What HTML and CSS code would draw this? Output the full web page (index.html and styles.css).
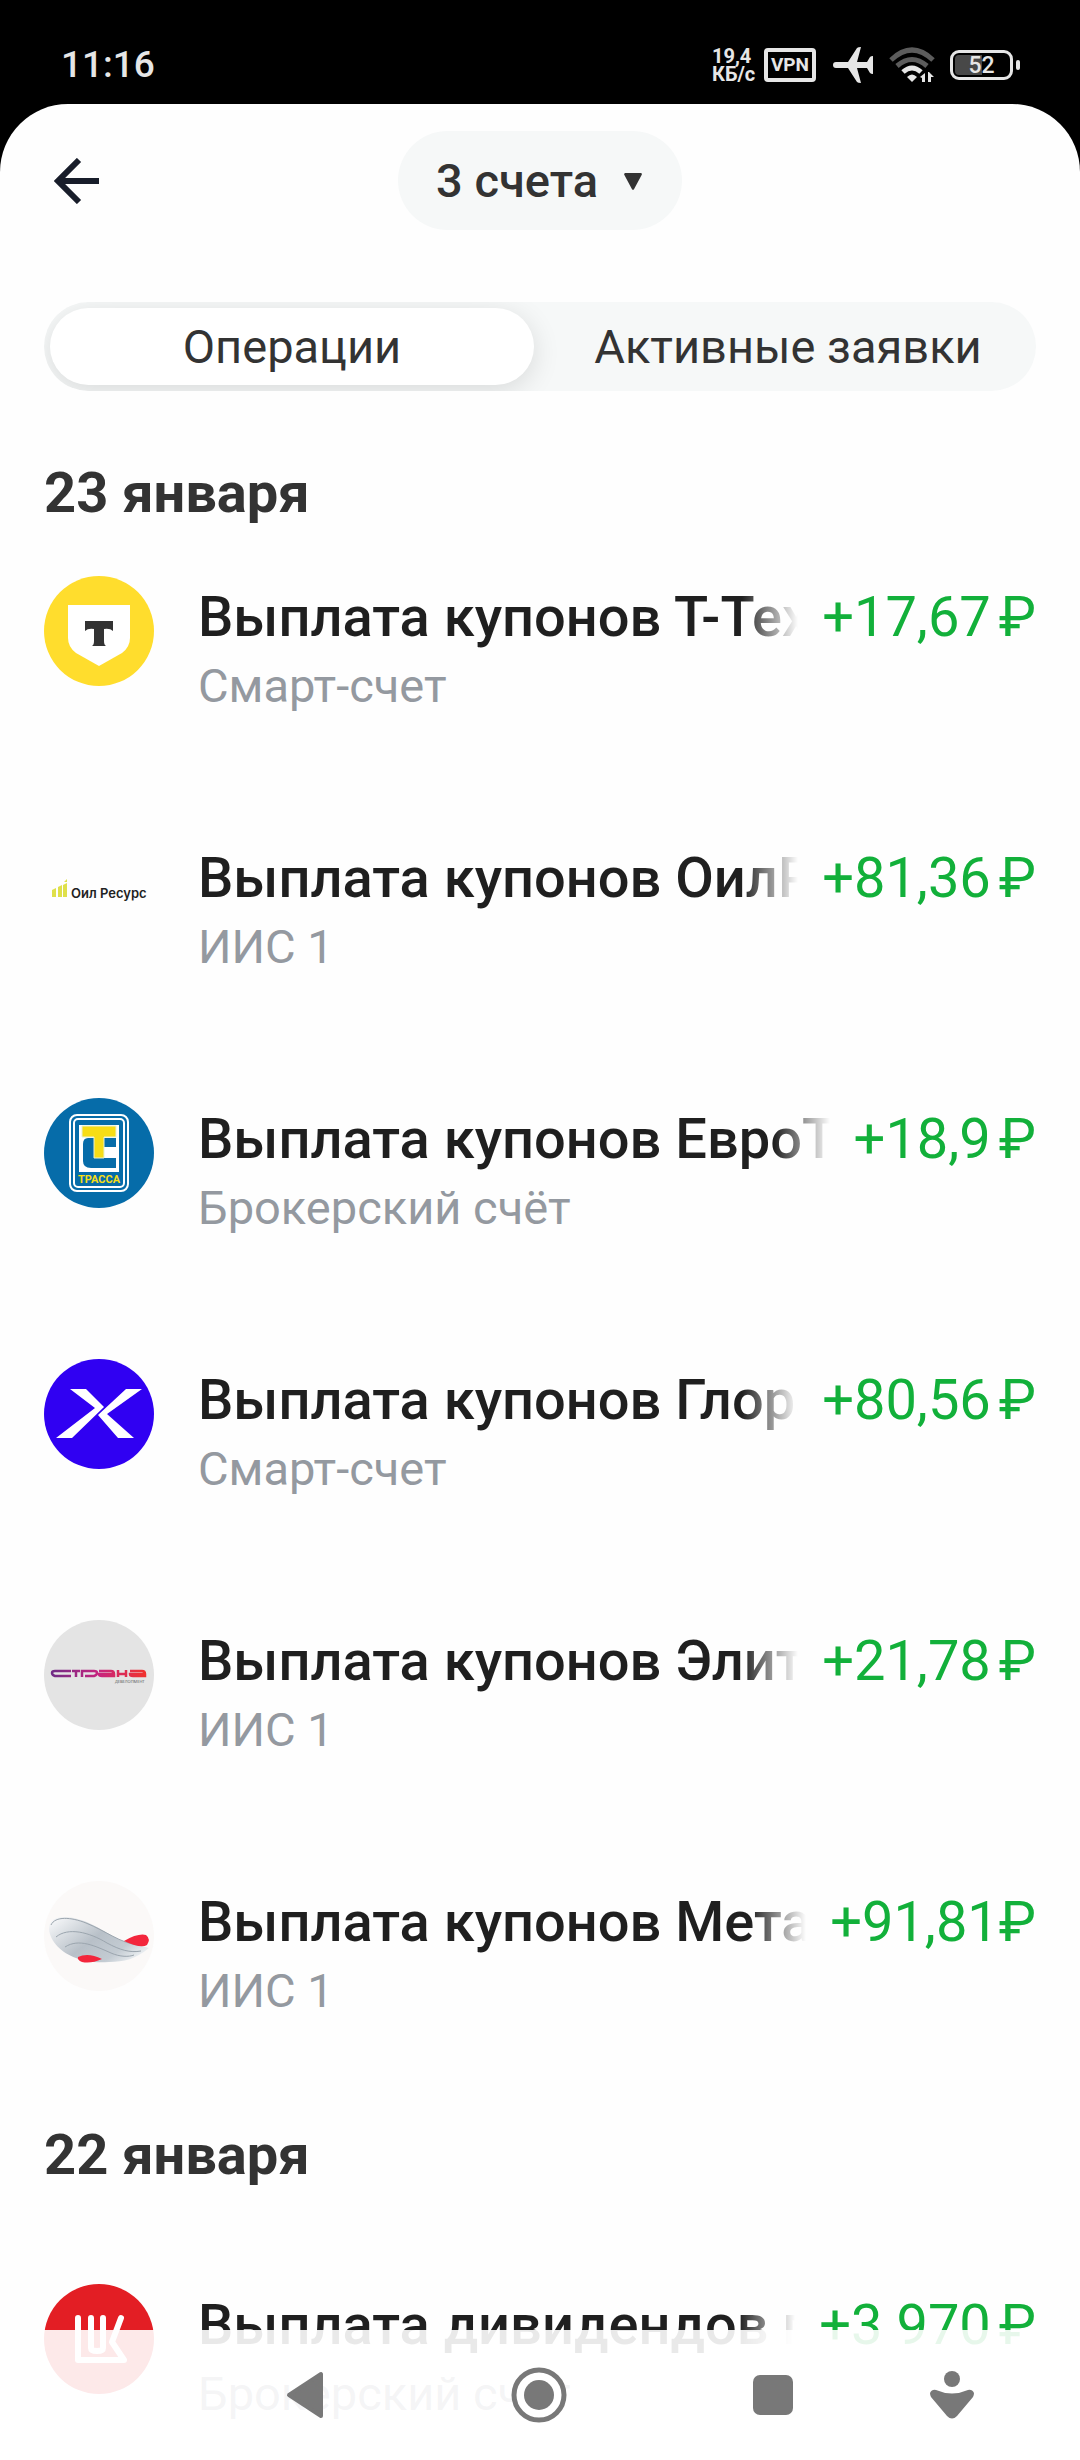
FILE: index.html
```html
<!DOCTYPE html>
<html lang="ru">
<head>
<meta charset="utf-8">
<meta name="viewport" content="width=device-width, initial-scale=1">
<title>Операции</title>
<link rel="stylesheet" href="styles.css">
</head>
<body>
<div class="status">
  <time class="clock">11:16</time>
  <div class="indicators">
    <span class="speed">19,4<br>КБ/с</span>
    <span class="vpn">VPN</span>
    <svg class="plane" width="40" height="36" viewBox="0 0 40 36" aria-hidden="true"><path d="M3 15H15L24 1Q25 0 28 0L24 15H34L37 10Q38 9 40 9V27Q38 27 37 26L34 21H24L28 36Q25 36 24 35L15 21H3Q0 21 0 18T3 15Z" fill="#e6e6e6"/></svg>
    <svg class="wifi" width="46" height="36" viewBox="0 0 46 36" aria-hidden="true"><g fill="none" stroke-width="5"><path d="M2 13Q23-7 44 13" stroke="#5c5c5c"/><path d="M8 19Q23 6 38 19" stroke="#5c5c5c"/><path d="M14 25Q23 17 32 25" stroke="#e6e6e6"/></g><path d="M18 30Q23 25 28 30L23 35Z" fill="#e6e6e6"/><path d="M31 30L36 26V35H33V31ZM39 25H40L45 30H42V35H39Z" fill="#e6e6e6"/></svg>
    <span class="battery"><span class="cell">52</span></span>
  </div>
</div>
<main class="sheet">
  <header class="bar">
    <button class="back" type="button" aria-label="Назад"><svg width="46" height="46" viewBox="0 0 46 46"><path d="M45 23H5M25 2L4 23L25 44" fill="none" stroke="#181d2a" stroke-width="6"/></svg></button>
    <div class="picker">
      <select class="accounts" aria-label="Счета"><option>3 счета</option></select>
      <svg class="caret" width="20" height="18" viewBox="0 0 18 16" aria-hidden="true"><path d="M2 1H16L9 14Z" fill="#333" stroke="#333" stroke-width="2" stroke-linejoin="round"/></svg>
    </div>
  </header>
  <div class="tabs" role="tablist">
    <button class="tab tab-on" type="button" role="tab" aria-selected="true">Операции</button>
    <button class="tab" type="button" role="tab" aria-selected="false">Активные заявки</button>
  </div>

  <section class="day">
    <h2 class="date">23 января</h2>
    <ul class="list">
      <li class="row">
        <svg class="logo" viewBox="0 0 110 110" aria-hidden="true"><circle cx="55" cy="55" r="55" fill="#ffdd2d"/><path d="M24 29H86V62Q86 71 78 77L55 90L32 77Q24 71 24 62Z" fill="#fff"/><path d="M41 45H69V55Q66 52 60 53V65Q60 69 62 70H48Q50 69 50 65V53Q44 52 41 55Z" fill="#333"/></svg>
        <div class="what"><span class="name">Выплата купонов Т-Технологии</span><span class="account">Смарт-счет</span></div>
        <span class="sum">+17,67<span class="cur">₽</span></span>
      </li>
      <li class="row">
        <svg class="logo" viewBox="0 0 110 110" aria-hidden="true"><path d="M8 53L12 51V60H8ZM14 50L18 48V60H14ZM19 48L23 46V60H19ZM20 45L23 42V45Z" fill="#dfe04a"/><text class="oil" x="27" y="61">Оил Ресурс</text></svg>
        <div class="what"><span class="name">Выплата купонов ОилРесурс</span><span class="account">ИИС 1</span></div>
        <span class="sum">+81,36<span class="cur">₽</span></span>
      </li>
      <li class="row">
        <svg class="logo" viewBox="0 0 110 110" aria-hidden="true"><circle cx="55" cy="55" r="55" fill="#066ca9"/><rect x="26" y="17" width="58" height="76" rx="7" fill="none" stroke="#fff" stroke-width="2"/><rect x="30" y="21" width="50" height="68" rx="4" fill="none" stroke="#fff" stroke-width="2"/><path d="M35 27H75V74H35Z" fill="#fff"/><path d="M44 40H72V49H54Q50 49 50 53V60H72V70H47Q39 70 39 63V46Q39 40 44 40Z" fill="#066ca9"/><path d="M38 28H72V39H60V60H50V39H38Z" fill="#f7dd16" stroke="#e8f0d0"/><rect x="33" y="75" width="44" height="11" fill="#066ca9"/><text class="trassa" x="55" y="85">ТРАССА</text></svg>
        <div class="what"><span class="name">Выплата купонов ЕвроТранс</span><span class="account">Брокерский счёт</span></div>
        <span class="sum">+18,9<span class="cur">₽</span></span>
      </li>
      <li class="row">
        <svg class="logo" viewBox="0 0 110 110" aria-hidden="true"><circle cx="55" cy="55" r="55" fill="#3000f2"/><path d="M26 30H42L60 48L28 79H12L51 49ZM98 30H82L54 56L74 79H90L63 55Z" fill="#fff"/></svg>
        <div class="what"><span class="name">Выплата купонов Глоракс</span><span class="account">Смарт-счет</span></div>
        <span class="sum">+80,56<span class="cur">₽</span></span>
      </li>
      <li class="row">
        <svg class="logo" viewBox="0 0 110 110" aria-hidden="true"><defs><linearGradient id="strana"><stop offset="0" stop-color="#702c86"/><stop offset=".5" stop-color="#c7247f"/><stop offset="1" stop-color="#f0322e"/></linearGradient></defs><circle cx="55" cy="55" r="55" fill="#e4e4e4"/><path d="M27 51H11Q8 51 8 53T11 56H27M28 51H36M32 51V57M38 57V51H50Q53 51 53 53T50 56H41M55 51H67Q70 51 70 54V56H58Q55 56 55 54H69M74 50V57M82 50V57M74 54H82M86 51H98Q101 51 101 54V56H89Q86 56 86 54H100" fill="none" stroke="url(#strana)" stroke-width="2.5"/><text class="dev" x="71" y="63">ДЕВЕЛОПМЕНТ</text></svg>
        <div class="what"><span class="name">Выплата купонов Элит Строй</span><span class="account">ИИС 1</span></div>
        <span class="sum">+21,78<span class="cur">₽</span></span>
      </li>
      <li class="row">
        <svg class="logo" viewBox="0 0 110 110" aria-hidden="true"><defs><linearGradient id="wing" x1="0" x2="1" y1=".2" y2=".8"><stop offset="0" stop-color="#f1f3f5"/><stop offset=".45" stop-color="#b8c0c8"/><stop offset=".75" stop-color="#c3cbd2"/><stop offset="1" stop-color="#f3f6f8"/></linearGradient></defs><circle cx="55" cy="55" r="55" fill="#fbf9f8"/><path d="M5 48C5 33 24 34 40 40C60 48 75 62 94 64L105 67C92 78 80 81 65 81C50 82 40 80 32 77C18 72 6 61 5 48Z" fill="url(#wing)"/><path d="M7 44C11 35 27 36 42 42C62 50 76 62 94 64M12 56C24 46 45 51 63 62C76 69 86 72 97 70M21 66C35 57 51 65 67 72C76 76 85 76 90 74" fill="none" stroke="#9ba5ae"/><path d="M80 60Q94 52 102 54Q107 58 103 64Q97 68 80 60ZM34 76Q44 71 58 78Q47 83 38 81Q33 79 34 76Z" fill="#f3263c"/></svg>
        <div class="what"><span class="name">Выплата купонов Металлоинвест</span><span class="account">ИИС 1</span></div>
        <span class="sum">+91,81<span class="cur cur-tight">₽</span></span>
      </li>
    </ul>
  </section>

  <section class="day day-next">
    <h2 class="date">22 января</h2>
    <ul class="list">
      <li class="row">
        <svg class="logo" viewBox="0 0 110 110" aria-hidden="true"><circle cx="55" cy="55" r="55" fill="#e31e24"/><path d="M34 34V76H80L68 58L77 34M47 34V64Q47 67 53 67T59 64V34" fill="none" stroke="#fff" stroke-width="6" stroke-linecap="round" stroke-linejoin="round"/></svg>
        <div class="what"><span class="name">Выплата дивидендов по акциям</span><span class="account">Брокерский счёт</span></div>
        <span class="sum">+3 970<span class="cur">₽</span></span>
      </li>
    </ul>
  </section>
</main>
<nav class="system">
  <button class="key" type="button" aria-label="Назад"><svg width="38" height="48" viewBox="0 0 38 48"><path d="M3 24L35 3V45Z" fill="#787878" stroke="#787878" stroke-width="4" stroke-linejoin="round"/></svg></button>
  <button class="key" type="button" aria-label="Домой"><svg width="56" height="56" viewBox="0 0 56 56"><circle cx="28" cy="28" r="25" fill="#fff" stroke="#787878" stroke-width="5"/><circle cx="28" cy="28" r="15" fill="#787878"/></svg></button>
  <button class="key" type="button" aria-label="Недавние"><svg width="40" height="40" viewBox="0 0 40 40"><rect width="40" height="40" rx="7" fill="#787878"/></svg></button>
  <button class="key" type="button" aria-label="Специальные возможности"><svg width="44" height="48" viewBox="0 0 44 48"><circle cx="22" cy="8" r="8" fill="#787878"/><path d="M6 19Q22 26 38 19Q42 18 44 22Q44 24 43 26L27 45Q22 50 17 45L1 26Q0 24 0 22Q2 18 6 19Z" fill="#787878"/></svg></button>
</nav>
</body>
</html>
```

FILE: styles.css
```css
* { box-sizing: border-box; }

body {
  margin: 0;
  background: #000;
  color: #333;
  font-family: Roboto, "Noto Sans", sans-serif;
}

button {
  border: 0;
  padding: 0;
  background: none;
  color: inherit;
  font: inherit;
}

svg { display: block; }

/* Status bar */
.status {
  display: flex;
  align-items: center;
  justify-content: space-between;
  height: 104px;
  padding: 26px 60px 0 61px;
  color: #e6e6e6;
}
.clock {
  font-size: 37px;
  line-height: 44px;
  font-weight: 500;
}
.indicators {
  display: flex;
  align-items: center;
}
.speed {
  width: 42px;
  margin-right: 10px;
  font-size: 20px;
  line-height: 18px;
  font-weight: 700;
  white-space: nowrap;
}
.vpn {
  width: 52px;
  height: 34px;
  margin-right: 17px;
  border: 4px solid #e6e6e6;
  border-radius: 4px;
  font-size: 19px;
  line-height: 26px;
  font-weight: 700;
  text-align: center;
}
.plane { margin-right: 16px; }
.wifi { margin-right: 15px; }
.battery {
  display: flex;
  align-items: center;
}
.battery::after {
  content: "";
  width: 4px;
  height: 10px;
  margin-left: 3px;
  border-radius: 2px;
  background: #e6e6e6;
}
.cell {
  width: 63px;
  height: 30px;
  padding: 2px;
  border: 3px solid #e6e6e6;
  border-radius: 9px;
  background: linear-gradient(90deg, #484848 50%, #000 50%) content-box;
  font-size: 23px;
  line-height: 22px;
  font-weight: 500;
  text-align: center;
}

/* Sheet */
.sheet {
  padding: 27px 44px 39px;
  border-radius: 68px 68px 0 0;
  background: #fefefe;
}
.bar {
  display: grid;
  grid-template-columns: 1fr auto 1fr;
  align-items: center;
}
.back {
  width: 66px;
  height: 66px;
  padding: 10px;
}
.picker { position: relative; }
.accounts {
  display: block;
  height: 99px;
  padding: 0 84px 0 38px;
  border: 0;
  border-radius: 50px;
  background: #f6f8f8;
  color: #333;
  font: 500 47px/54px Roboto, "Noto Sans", sans-serif;
  appearance: none;
}
.caret {
  position: absolute;
  top: 42px;
  right: 39px;
  pointer-events: none;
}

.tabs {
  display: grid;
  grid-template-columns: 1fr 1fr;
  gap: 12px;
  margin-top: 72px;
  padding: 6px;
  border-radius: 45px;
  background: #f6f8f8;
  overflow: hidden;
}
.tab {
  height: 77px;
  border-radius: 39px;
  font-size: 47px;
  line-height: 54px;
  white-space: nowrap;
}
.tab-on {
  background: #fff;
  box-shadow: 0 6px 28px rgba(0, 0, 0, .12);
}

/* Operations */
.day { margin-top: 69px; }
.day-next { margin-top: 104px; }
.date {
  margin: 0 0 50px;
  font-size: 56px;
  line-height: 66px;
  font-weight: 700;
}
.day-next .date { margin-bottom: 96px; }
.list {
  display: grid;
  gap: 124px;
  margin: 0;
  padding: 0;
  list-style: none;
}
.row {
  display: grid;
  grid-template-columns: 110px minmax(0, 1fr) auto;
  align-items: start;
}
.logo {
  width: 110px;
  height: 110px;
}
.what {
  display: grid;
  gap: 9px;
  padding-top: 8px;
  margin-left: 44px;
}
.name {
  overflow: hidden;
  color: #1f1f1f;
  font-size: 56px;
  line-height: 66px;
  font-weight: 500;
  white-space: nowrap;
  -webkit-mask-image: linear-gradient(270deg, transparent, #000 56px);
  mask-image: linear-gradient(270deg, transparent, #000 56px);
}
.account {
  color: #9499a0;
  font-size: 47px;
  line-height: 54px;
}
.sum {
  padding: 8px 0 0 24px;
  color: #12b03a;
  font-size: 56px;
  line-height: 66px;
  white-space: nowrap;
}
.cur { margin-left: 8px; }
.cur-tight { margin-left: 0; }

.oil {
  fill: #222;
  font: 600 13px Inter, sans-serif;
}
.trassa {
  fill: #f7dd16;
  font: 700 11px Roboto, sans-serif;
  text-anchor: middle;
}
.dev {
  fill: #555;
  font: 4px "Open Sans", sans-serif;
}

/* System navigation */
.system {
  position: fixed;
  right: 0;
  bottom: 0;
  left: 0;
  display: grid;
  grid-template-columns: 234fr 234fr 234fr 124fr;
  height: 130px;
  padding: 0 66px 0 188px;
  background: rgba(255, 255, 255, .9);
}
.key {
  display: flex;
  align-items: center;
  justify-content: center;
}
```
